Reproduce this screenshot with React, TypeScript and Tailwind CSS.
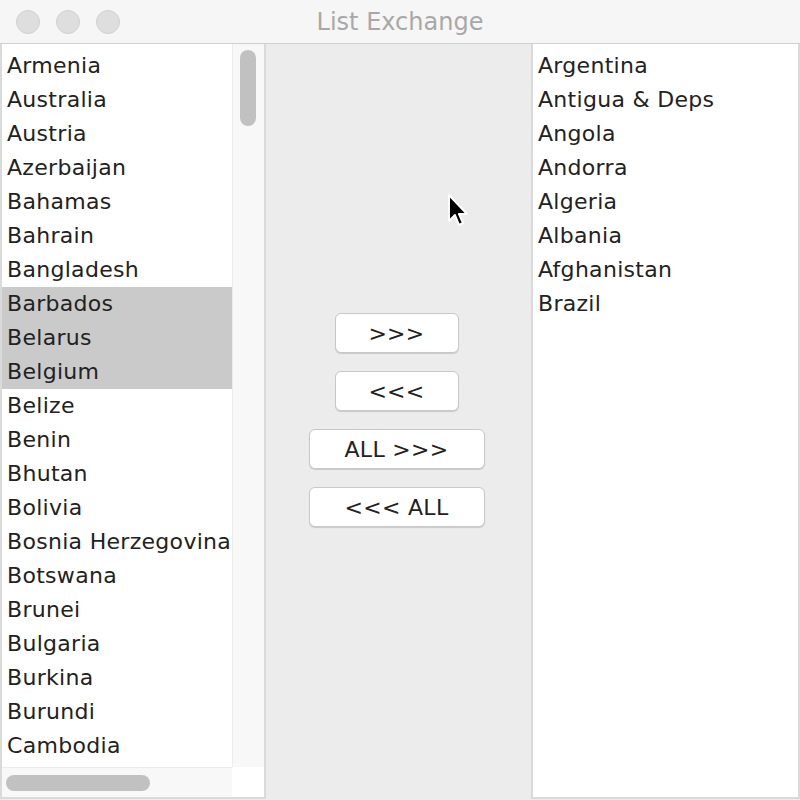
import React from "react";

const left = [
  "Armenia",
  "Australia",
  "Austria",
  "Azerbaijan",
  "Bahamas",
  "Bahrain",
  "Bangladesh",
  "Barbados",
  "Belarus",
  "Belgium",
  "Belize",
  "Benin",
  "Bhutan",
  "Bolivia",
  "Bosnia Herzegovina",
  "Botswana",
  "Brunei",
  "Bulgaria",
  "Burkina",
  "Burundi",
  "Cambodia",
];

const right = [
  "Argentina",
  "Antigua & Deps",
  "Angola",
  "Andorra",
  "Algeria",
  "Albania",
  "Afghanistan",
  "Brazil",
];

const selected = ["Barbados", "Belarus", "Belgium"];

const font = { fontFamily: '"DejaVu Sans", "Liberation Sans", sans-serif' };

const Btn = ({ label, wide }: { label: string; wide?: boolean }) => (
  <button
    className={`h-[40px] ${wide ? "w-[176px]" : "w-[124px]"} rounded-[6px] border border-[#c8c8c8] bg-white text-[22px] tracking-[0.3px] text-[#222] shadow-[0_1px_1px_rgba(0,0,0,0.15)]`}
  >
    {label}
  </button>
);

const App = () => {
  return (
    <div
      className="relative flex h-[800px] w-[800px] flex-col overflow-hidden bg-[#ececec]"
      style={font}
    >
      {/* Title bar */}
      <div className="relative flex h-[44px] items-center justify-center border-b border-[#d0d0d0] bg-[#f6f6f6]">
        <div className="absolute left-[16px] top-[10px] flex gap-[16px]">
          <span className="h-[24px] w-[24px] rounded-full border border-[#d0d0d0] bg-[#dedede]" />
          <span className="h-[24px] w-[24px] rounded-full border border-[#d0d0d0] bg-[#dedede]" />
          <span className="h-[24px] w-[24px] rounded-full border border-[#d0d0d0] bg-[#dedede]" />
        </div>
        <span className="text-[24px] text-[#a8a8a8]">List Exchange</span>
      </div>

      <div className="flex flex-1">
        {/* Left list */}
        <div className="flex h-[755px] w-[266px] flex-col border-2 border-t-0 border-[#dadada] bg-white">
          <div className="flex flex-1 overflow-hidden">
            <div className="w-[230px] pt-[5px]">
              {left.map((c) => (
                <div
                  key={c}
                  className={`h-[34px] whitespace-nowrap pl-[5px] text-[22px] leading-[34px] tracking-[0.3px] text-[#222] ${
                    selected.includes(c) ? "bg-[#cacaca]" : ""
                  }`}
                >
                  {c}
                </div>
              ))}
            </div>
            <div className="w-[32px] border-l border-[#ececec] bg-[#f8f8f8] pl-[7px] pt-[6px]">
              <div className="h-[76px] w-[16px] rounded-full bg-[#c1c1c1]" />
            </div>
          </div>
          <div className="flex h-[30px]">
            <div className="w-[230px] border-t border-[#ececec] bg-[#f8f8f8] pl-[4px] pt-[7px]">
              <div className="h-[16px] w-[144px] rounded-full bg-[#c1c1c1]" />
            </div>
            <div className="flex-1 bg-white" />
          </div>
        </div>

        {/* Buttons */}
        <div className="flex w-[265px] flex-col items-center gap-[18px] pr-[4px] pt-[269px]">
          <Btn label=">>>" />
          <Btn label="<<<" />
          <Btn label="ALL >>>" wide />
          <Btn label="<<< ALL" wide />
        </div>

        {/* Right list */}
        <div className="h-[755px] w-[269px] border-2 border-t-0 border-[#dadada] bg-white pt-[5px]">
          {right.map((c) => (
            <div
              key={c}
              className="h-[34px] whitespace-nowrap pl-[5px] text-[22px] leading-[34px] tracking-[0.3px] text-[#222]"
            >
              {c}
            </div>
          ))}
        </div>
      </div>

      {/* Mouse cursor */}
      <svg
        className="absolute left-[447px] top-[194px]"
        width="24"
        height="36"
        viewBox="0 0 24 36"
      >
        <path
          d="M2 1 L2 27 L8 21 L12 31 L16 29 L12 20 L20 20 Z"
          fill="#000"
          stroke="#fff"
          strokeWidth="2"
          strokeLinejoin="round"
        />
      </svg>
    </div>
  );
};

export default App;
